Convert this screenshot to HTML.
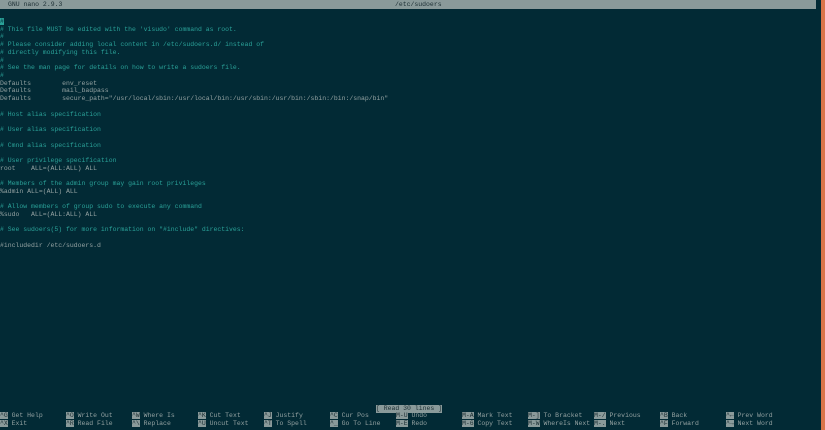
<!DOCTYPE html>
<html><head><meta charset="utf-8"><style>
html,body{margin:0;padding:0}
body{width:825px;height:430px;background:#022a35;position:relative;overflow:hidden;font-family:"Liberation Mono",monospace;font-size:6.47px;color:#93a1a1}
.hdr{position:absolute;left:0;top:0;width:816px;height:9px;background:#8a9a9a;color:#1b2e33;line-height:9px;white-space:pre}
.hdr span{position:absolute;top:0}
.orange{position:absolute;right:0;top:0;width:4px;height:430px;background:#d9744a}
pre{margin:0;position:absolute;left:0;top:18px;font:inherit;line-height:7.72px;white-space:pre}
.c{color:#2aa198}
.cur{background:#2aa198;color:#022a35}
.st{position:absolute;top:405px;left:376px;background:#8a9a9a;color:#1b2e33;line-height:8px;white-space:pre}
.sc{position:absolute;line-height:8px;white-space:pre}
.k{background:#8a9a9a;color:#1b2e33}
</style></head><body>
<div class="hdr"><span style="left:8px">GNU nano 2.9.3</span><span style="left:395px">/etc/sudoers</span></div>
<div class="orange"></div>
<pre><span class="cur">#</span>
<span class="c"># This file MUST be edited with the 'visudo' command as root.
#
# Please consider adding local content in /etc/sudoers.d/ instead of
# directly modifying this file.
#
# See the man page for details on how to write a sudoers file.
#</span>
Defaults        env_reset
Defaults        mail_badpass
Defaults        secure_path="/usr/local/sbin:/usr/local/bin:/usr/sbin:/usr/bin:/sbin:/bin:/snap/bin"

<span class="c"># Host alias specification</span>

<span class="c"># User alias specification</span>

<span class="c"># Cmnd alias specification</span>

<span class="c"># User privilege specification</span>
root    ALL=(ALL:ALL) ALL

<span class="c"># Members of the admin group may gain root privileges</span>
%admin ALL=(ALL) ALL

<span class="c"># Allow members of group sudo to execute any command</span>
%sudo   ALL=(ALL:ALL) ALL

<span class="c"># See sudoers(5) for more information on "#include" directives:</span>

#includedir /etc/sudoers.d</pre>
<div class="st">[ Read 30 lines ]</div>
<div class="sc" style="left:0;top:412px"><span class="k">^G</span> Get Help
<span class="k">^X</span> Exit</div>
<div class="sc" style="left:66px;top:412px"><span class="k">^O</span> Write Out
<span class="k">^R</span> Read File</div>
<div class="sc" style="left:132px;top:412px"><span class="k">^W</span> Where Is
<span class="k">^\</span> Replace</div>
<div class="sc" style="left:198px;top:412px"><span class="k">^K</span> Cut Text
<span class="k">^U</span> Uncut Text</div>
<div class="sc" style="left:264px;top:412px"><span class="k">^J</span> Justify
<span class="k">^T</span> To Spell</div>
<div class="sc" style="left:330px;top:412px"><span class="k">^C</span> Cur Pos
<span class="k">^_</span> Go To Line</div>
<div class="sc" style="left:396px;top:412px"><span class="k">M-U</span> Undo
<span class="k">M-E</span> Redo</div>
<div class="sc" style="left:462px;top:412px"><span class="k">M-A</span> Mark Text
<span class="k">M-6</span> Copy Text</div>
<div class="sc" style="left:528px;top:412px"><span class="k">M-]</span> To Bracket
<span class="k">M-W</span> WhereIs Next</div>
<div class="sc" style="left:594px;top:412px"><span class="k">M-/</span> Previous
<span class="k">M-.</span> Next</div>
<div class="sc" style="left:660px;top:412px"><span class="k">^B</span> Back
<span class="k">^F</span> Forward</div>
<div class="sc" style="left:726px;top:412px"><span class="k">^←</span> Prev Word
<span class="k">^→</span> Next Word</div>
</body></html>
